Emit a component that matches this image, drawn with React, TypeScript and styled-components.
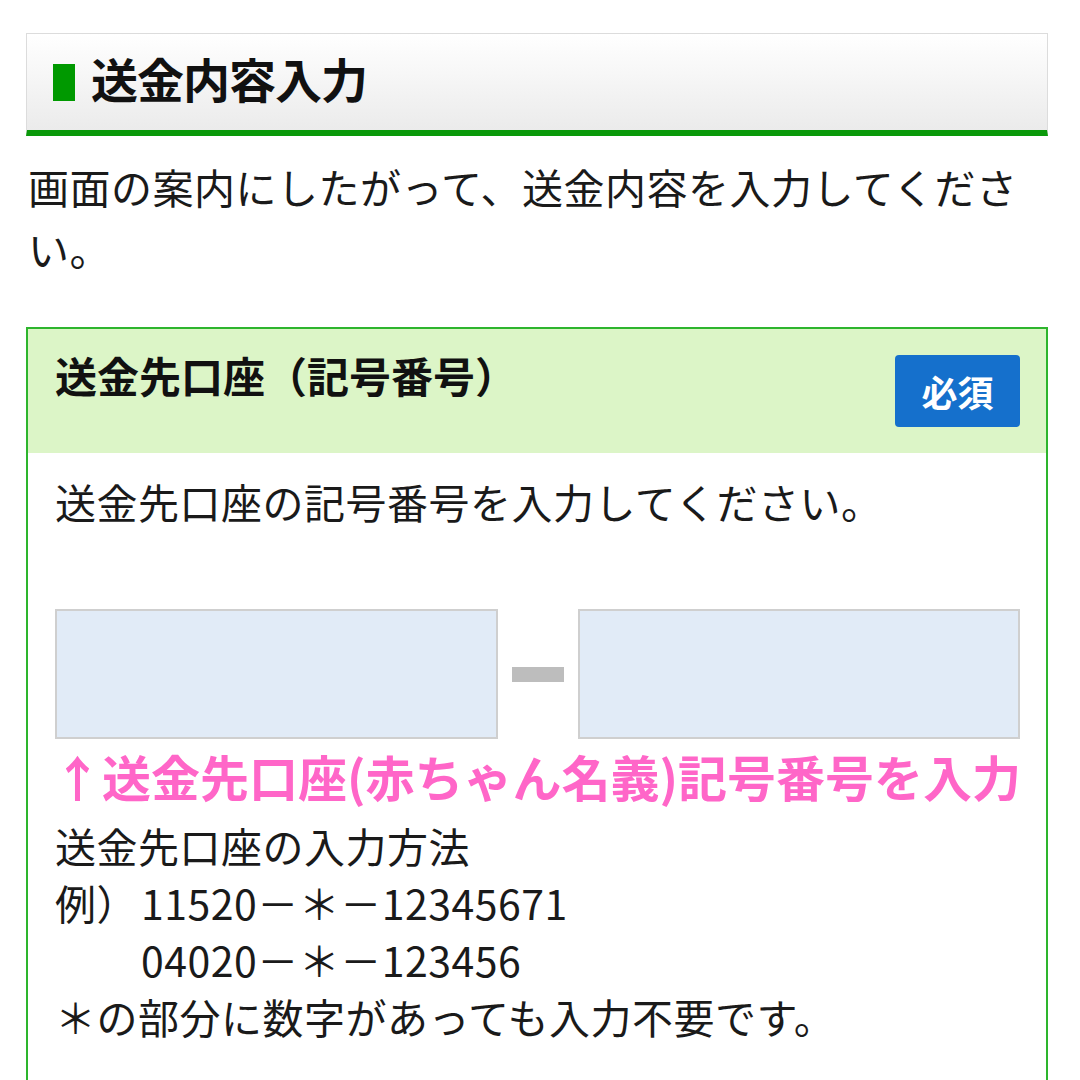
import React from "react";
import styled, { createGlobalStyle } from "styled-components";

const Global = createGlobalStyle`
  html, body { margin: 0; padding: 0; background: #fff; }
  body { font-family: "Noto Sans CJK JP", "Noto Sans", sans-serif; color: #111; }
`;

const Page = styled.div`
  padding: 33px 32px 0 26px;
  height: 1080px;
  overflow: hidden;
  box-sizing: border-box;
`;

const SectionHeader = styled.div`
  display: flex;
  align-items: center;
  gap: 16px;
  height: 96px;
  box-sizing: content-box;
  padding-left: 26px;
  border: 1px solid #dcdcdc;
  border-bottom: 6px solid #0a990a;
  background: linear-gradient(#ffffff, #ebebeb);
`;

const Marker = styled.span`
  width: 22px;
  height: 37px;
  background: #009900;
`;

const SectionTitle = styled.h1`
  margin: -9px 0 0 0;
  font-size: 47px;
  font-weight: 700;
  letter-spacing: -1px;
  line-height: 1;
  color: #111;
`;

const Lead = styled.p`
  margin: 19px 0 0 2px;
  font-size: 41px;
  line-height: 62px;
  letter-spacing: 0.5px;
  color: #1a1a1a;
`;

const Card = styled.div`
  margin-top: 48px;
  border: 2px solid #2db52d;
  height: 800px;
`;

const CardHeader = styled.div`
  display: flex;
  align-items: flex-start;
  justify-content: space-between;
  padding: 26px 26px 26px 27px;
  background: #dcf5c7;
`;

const CardTitle = styled.h2`
  margin: 0;
  font-size: 42px;
  font-weight: 700;
  line-height: 40px;
  padding-top: 0;
  color: #111;
`;

const Badge = styled.span`
  display: flex;
  align-items: center;
  justify-content: center;
  width: 125px;
  height: 72px;
  border-radius: 4px;
  background: #1570cc;
  color: #fff;
  font-size: 36px;
  font-weight: 700;
`;

const CardBody = styled.div`
  padding: 20px 26px 0 27px;
`;

const Text = styled.div<{ $indent?: number }>`
  font-size: 41px;
  letter-spacing: 0.5px;
  line-height: 57px;
  color: #1a1a1a;
  padding-left: ${(p) => p.$indent ?? 0}px;
  white-space: nowrap;
`;

const InputRow = styled.div`
  margin-top: 79px;
  display: flex;
  align-items: center;
  gap: 14px;
`;

const Field = styled.input`
  flex: 1;
  min-width: 0;
  height: 130px;
  box-sizing: border-box;
  border: 2px solid #cfcfcf;
  background: #e1ebf7;
  outline: none;
`;

const Dash = styled.span`
  width: 52px;
  height: 15px;
  background: #bdbdbd;
`;

const Note = styled.div`
  margin: 6px 0 10px -2px;
  font-size: 49px;
  font-weight: 700;
  line-height: 62px;
  letter-spacing: 0;
  color: #ff66c8;
  white-space: nowrap;
`;

const Example = styled.div`
  display: flex;
`;

const ExLabel = styled.span`
  width: 86px;
`;

export default function App() {
  return (
    <>
      <Global />
      <Page>
        <SectionHeader>
          <Marker />
          <SectionTitle>送金内容入力</SectionTitle>
        </SectionHeader>
        <Lead>画面の案内にしたがって、送金内容を入力してください。</Lead>
        <Card>
          <CardHeader>
            <CardTitle>送金先口座（記号番号）</CardTitle>
            <Badge>必須</Badge>
          </CardHeader>
          <CardBody>
            <Text>送金先口座の記号番号を入力してください。</Text>
            <InputRow>
              <Field aria-label="記号" />
              <Dash />
              <Field aria-label="番号" />
            </InputRow>
            <Note>↑送金先口座(赤ちゃん名義)記号番号を入力</Note>
            <Text>送金先口座の入力方法</Text>
            <Text as={Example}>
              <ExLabel>例）</ExLabel>
              <span>11520－＊－12345671</span>
            </Text>
            <Text $indent={86}>04020－＊－123456</Text>
            <Text>＊の部分に数字があっても入力不要です。</Text>
          </CardBody>
        </Card>
      </Page>
    </>
  );
}
